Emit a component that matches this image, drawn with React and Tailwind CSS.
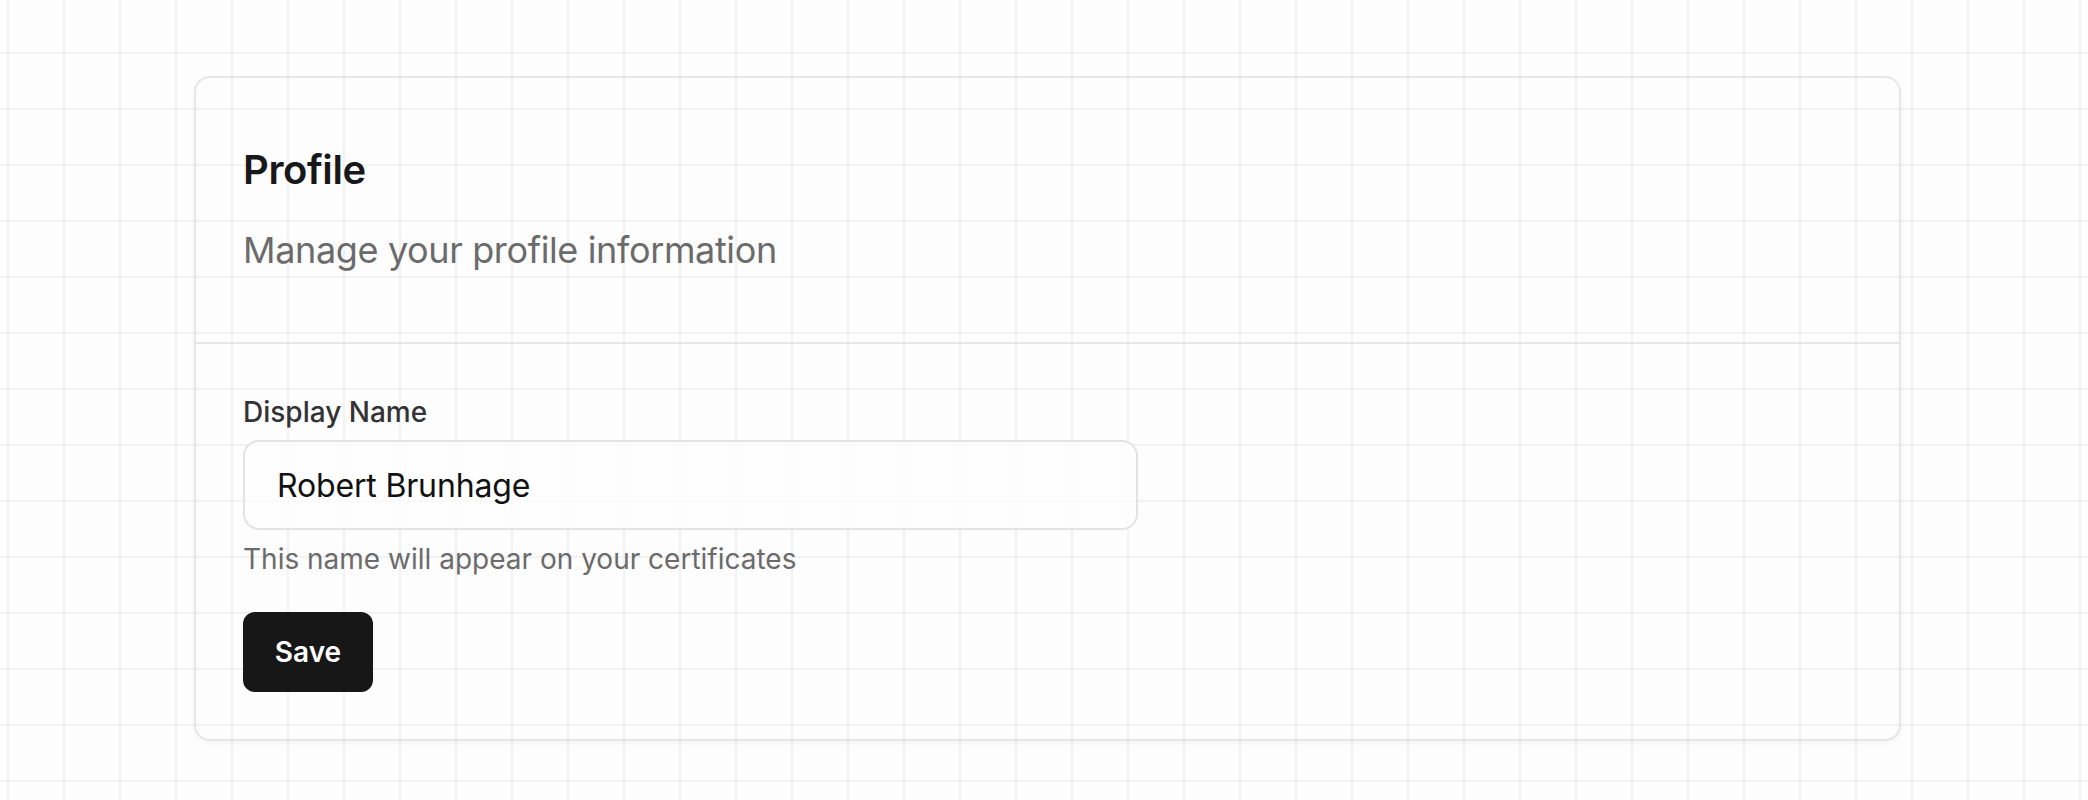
export default function App() {
  return (
    <div
      className="min-h-[800px] w-full bg-[#fdfdfd] bg-[linear-gradient(to_right,#f2f2f4_2px,transparent_2px),linear-gradient(to_bottom,#f2f2f4_2px,transparent_2px)] bg-[size:56px_56px] bg-[position:7px_52px] pt-[76px] pl-[194px] font-['Inter','Liberation_Sans',sans-serif]"
    >
      {/* Card */}
      <div className="w-[1707px] rounded-[16px] border-2 border-[#e6e6e9] shadow-[0_2px_4px_rgba(0,0,0,0.04)]">
        {/* Header */}
        <div className="border-b-2 border-[#e6e6e9] px-[47px] pt-[64px] pb-[64px]">
          <h1 className="text-[40px] leading-[56px] font-semibold tracking-[-0.01em] text-[#18181b]">
            Profile
          </h1>
          <p className="mt-[24px] text-[36px] leading-[56px] tracking-[-0.01em] text-[#6b6b6b]">
            Manage your profile information
          </p>
        </div>

        {/* Body */}
        <div className="px-[47px] pt-[48px] pb-[47px]">
          <label className="block text-[28px] leading-[40px] font-medium text-[#333336]">
            Display Name
          </label>
          <input
            type="text"
            defaultValue="Robert Brunhage"
            className="mt-[8px] block h-[90px] w-[895px] rounded-[16px] border-2 border-[#e3e3e6] bg-white/60 px-[32px] text-[32px] tracking-[-0.005em] text-[#111111] outline-none"
          />
          <p className="mt-[9px] text-[28px] leading-[40px] text-[#6b6b6b]">
            This name will appear on your certificates
          </p>
          <button className="mt-[33px] flex h-[80px] w-[130px] items-center justify-center rounded-[12px] bg-[#171717] text-[28px] font-semibold text-white">
            Save
          </button>
        </div>
      </div>
    </div>
  );
}
